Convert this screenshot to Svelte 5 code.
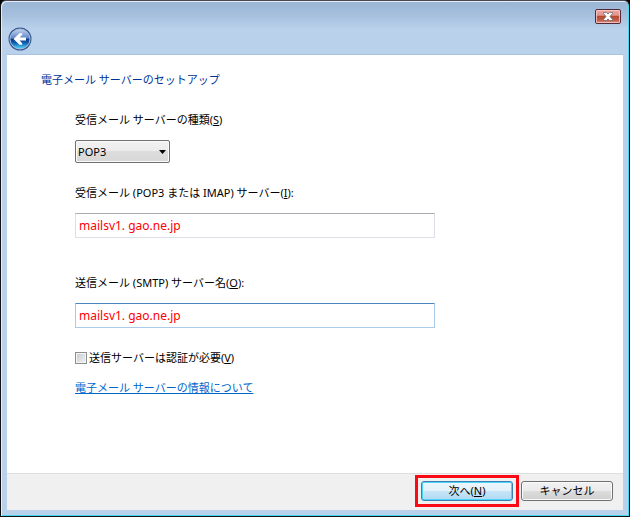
<script lang="ts">
  let serverType = $state('POP3');
  let incoming = $state('mailsv1. gao.ne.jp');
  let outgoing = $state('mailsv1. gao.ne.jp');
  let needsAuth = $state(false);
</script>

<div class="window">
  <header>
    <button type="button" class="close" aria-label="閉じる">
      <svg viewBox="0 0 26 15" width="26" height="15">
        <defs>
          <linearGradient id="close-fill" x1="0" y1="0" x2="0" y2="1">
            <stop offset="0" stop-color="#f0aaa4" />
            <stop offset="0.42" stop-color="#e0938c" />
            <stop offset="0.46" stop-color="#b5482f" />
            <stop offset="0.75" stop-color="#c05a48" />
            <stop offset="1" stop-color="#e0988c" />
          </linearGradient>
        </defs>
        <rect x="0.5" y="0.5" width="25" height="14" rx="1.5" fill="url(#close-fill)" stroke="#522938" />
        <rect x="1.5" y="1.5" width="23" height="12" rx="0.5" fill="none" stroke="#f9cdc8" stroke-opacity="0.8" />
        <path
          d="M8.500 3.500h3L13 5l1.500-1.500h3v1L15 7.500l2.500 3v1h-3L13 10l-1.500 1.500h-3v-1l2.500-3-2.500-3z"
          fill="#fff"
          stroke="#686a70"
          stroke-width="0.8"
        />
      </svg>
    </button>
    <button type="button" class="back" aria-label="戻る">
      <svg viewBox="0 0 24 24" width="24" height="24">
        <defs>
          <linearGradient id="back-fill" x1="0" y1="0" x2="0" y2="1">
            <stop offset="0" stop-color="#c3d3ee" />
            <stop offset="0.46" stop-color="#5f86c6" />
            <stop offset="0.5" stop-color="#09357f" />
            <stop offset="0.72" stop-color="#1268b8" />
            <stop offset="1" stop-color="#5be0fb" />
          </linearGradient>
        </defs>
        <circle cx="12" cy="12" r="11.500" fill="#38598f" />
        <circle cx="12" cy="12" r="10" fill="url(#back-fill)" stroke="#a4bfe2" />
        <path
          d="M5.500 12l6-5.800h2.700v1.600L11.600 10.500H18v3h-6.400l2.600 2.700v1.600h-2.700z"
          fill="#fff"
        />
      </svg>
    </button>
  </header>

  <main>
    <h1>電子メール サーバーのセットアップ</h1>
    <form>
      <label for="type">受信メール サーバーの種類(<u>S</u>)</label>
      <div class="select">
        <select id="type" bind:value={serverType}>
          <option>POP3</option>
          <option>IMAP</option>
        </select>
        <svg viewBox="0 0 7 4" width="7" height="4" aria-hidden="true">
          <path d="M0 0h7L3.500 4z" fill="#000" />
        </svg>
      </div>

      <label for="incoming">受信メール (POP3 または IMAP) サーバー(<u>I</u>):</label>
      <input id="incoming" class="field" type="text" bind:value={incoming} />

      <label for="outgoing" class="apart">送信メール (SMTP) サーバー名(<u>O</u>):</label>
      <input id="outgoing" class="field active" type="text" bind:value={outgoing} />

      <label class="check">
        <input type="checkbox" bind:checked={needsAuth} />
        <span>送信サーバーは認証が必要(<u>V</u>)</span>
      </label>
      <a href="#about">電子メール サーバーの情報について</a>
    </form>
  </main>

  <footer>
    <div class="highlight">
      <button type="button" class="push default">次へ(<u>N</u>)</button>
    </div>
    <button type="button" class="push">キャンセル</button>
  </footer>
</div>

<style>
  :global(body) {
    margin: 0;
    background: #000;
  }

  .window {
    box-sizing: border-box;
    display: flex;
    flex-direction: column;
    min-height: 100vh;
    padding: 0 6px 6px;
    border: 1px solid #111;
    border-top-color: #4b4650;
    border-radius: 6px 6px 0 0;
    color: #000;
    background: linear-gradient(#9ab5d5, #a5bfdd 14px, #b9d1ea 28px);
    box-shadow:
      inset 1px 1px 0 #e4effa,
      inset -1px -1px 0 #43d9f2;
    font-family: 'Noto Sans', 'Noto Sans CJK JP', sans-serif;
    font-size: 11px;
    line-height: 16px;
  }

  header {
    display: flex;
    flex-direction: column;
    align-items: flex-start;
    height: 54px;
  }

  header button {
    display: block;
    padding: 0;
    border: 0;
    background: none;
  }

  header svg {
    display: block;
  }

  .close {
    align-self: flex-end;
    margin: 8px 2px 3px 0;
  }

  .back {
    margin-left: 1px;
  }

  main {
    flex: 1;
    padding: 17px 34px 16px;
    background: #fff;
    box-shadow: 0 -1px 0 #a9c3df;
  }

  h1 {
    margin: 0 0 24px;
    color: #003399;
    font-size: 11px;
    font-weight: 400;
  }

  form {
    display: flex;
    flex-direction: column;
    align-items: flex-start;
    padding-left: 34px;
  }

  .select {
    position: relative;
    width: 95px;
    margin: 12px 0 22px;
  }

  select {
    appearance: none;
    display: block;
    box-sizing: border-box;
    width: 100%;
    height: 23px;
    padding: 0 16px 0 2px;
    border: 1px solid #707070;
    border-radius: 2px;
    color: #000;
    background: linear-gradient(#f2f2f2, #ebebeb 48%, #dddddd 50%, #d8d8d8);
    box-shadow: inset 0 0 0 1px #fafafa;
    font: inherit;
  }

  .select svg {
    position: absolute;
    top: 10px;
    right: 4px;
    pointer-events: none;
  }

  .field {
    box-sizing: border-box;
    width: 100%;
    max-width: 360px;
    height: 25px;
    margin-top: 12px;
    padding: 0 3px;
    border: 1px solid #dcdfe6;
    border-top-color: #abadb3;
    border-radius: 1px;
    outline: none;
    color: #f00;
    background: #fff;
    font: inherit;
    font-size: 12px;
  }

  .field.active {
    border-color: #a9cbe9;
    border-top-color: #4a86bd;
  }

  .apart {
    margin-top: 37px;
  }

  .check {
    display: flex;
    align-items: center;
    gap: 2px;
    margin: 22px 0 14px;
  }

  .check input {
    appearance: none;
    box-sizing: border-box;
    width: 12px;
    height: 12px;
    margin: 0;
    border: 1px solid #8e8f8f;
    background: linear-gradient(135deg, #c6cad0, #f2f3f4);
    box-shadow: inset 0 0 0 1px #f4f4f4;
  }

  .check input:checked {
    background: #26549c;
  }

  a {
    color: #0066cc;
  }

  footer {
    display: flex;
    align-items: center;
    justify-content: flex-end;
    gap: 2px;
    padding: 1px 10px 3px;
    border-top: 1px solid #dfdfdf;
    background: #f0f0f0;
  }

  .highlight {
    padding: 3px;
    border: 3px solid #fa0a14;
  }

  .push {
    display: block;
    box-sizing: border-box;
    width: 92px;
    height: 20px;
    padding: 0;
    border: 1px solid #707070;
    border-radius: 3px;
    color: #000;
    background: linear-gradient(#f2f2f2, #ebebeb 48%, #dddddd 50%, #cfcfcf);
    box-shadow: inset 0 0 0 1px #fafafa;
    font: inherit;
  }

  .default {
    border-color: #3c7fb1;
    background: linear-gradient(#eef6fb, #e2f1fa 48%, #c6e5f7 50%, #b2daf2);
    box-shadow: inset 0 0 0 1px #48d5f8;
  }
</style>
